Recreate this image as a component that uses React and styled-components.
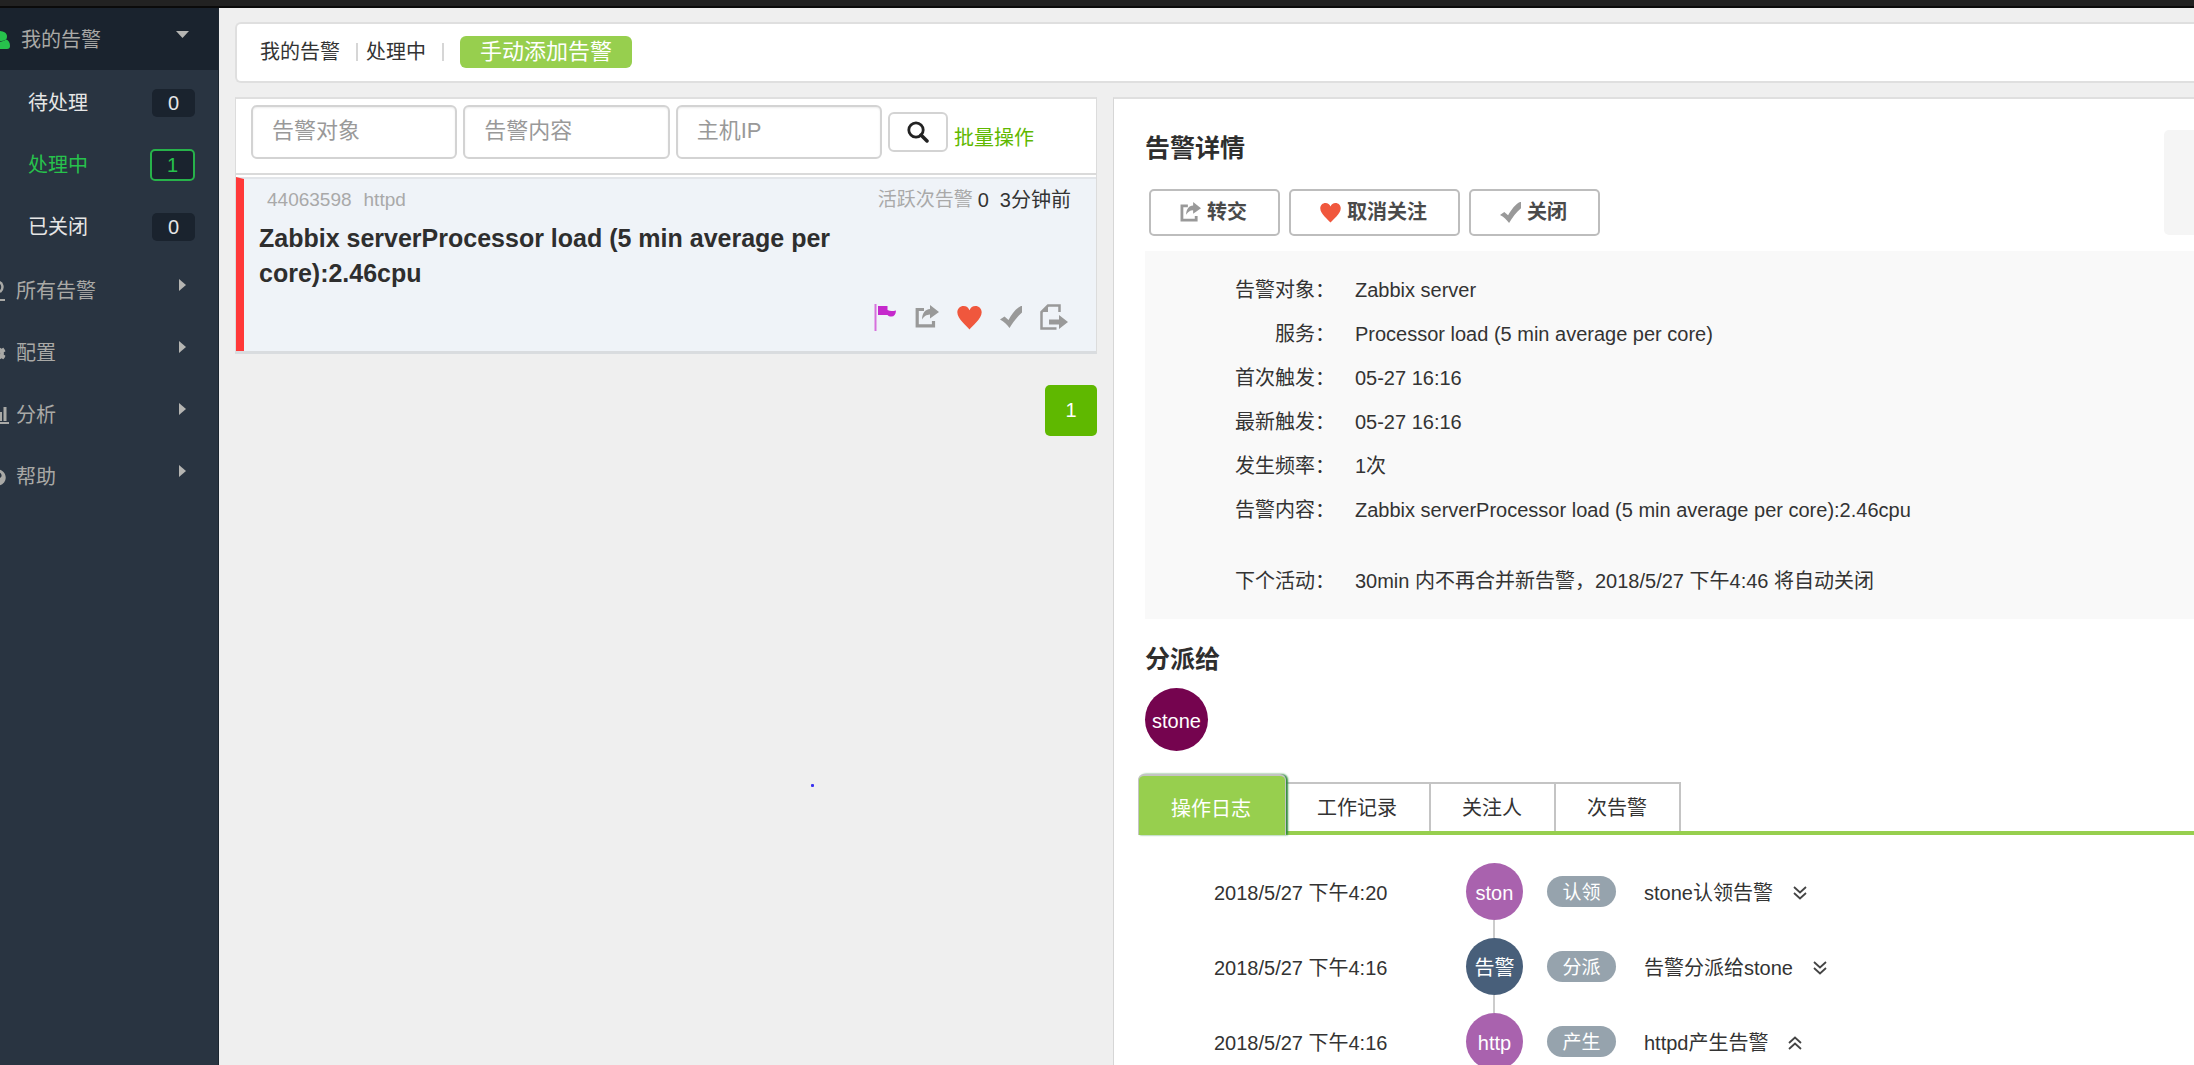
import React from "react";
import styled, { createGlobalStyle, css } from "styled-components";
import { FaCog, FaQuestionCircle } from "react-icons/fa";

const GlobalStyle = createGlobalStyle`
  *, *::before, *::after { box-sizing: border-box; }
  body {
    margin: 0;
    background: #efefef;
    color: #333;
    font-family: "Liberation Sans", Arial, "Noto Sans CJK SC", sans-serif;
    font-size: 20px;
    line-height: 30px;
  }
  button, input { font-family: inherit; }
  button { cursor: pointer; }
  h1, h2, h3, p, ul, ol, dl, dd { margin: 0; padding: 0; }
  ul, ol { list-style: none; }
`;

const Shell = styled.div`
  position: relative;
  display: flex;
  flex-direction: column;
  height: 100vh;
  overflow: hidden;
`;

const TopBar = styled.header`
  flex: none;
  height: 8px;
  background: #222;
  border-bottom: 2px solid #0b0b0b;
`;

const Body = styled.div`
  flex: 1;
  min-height: 0;
  display: flex;
`;

/* ---------- sidebar ---------- */

const Sidebar = styled.nav`
  flex: 0 0 219px;
  background: #293441;
  border-right: 1px solid #1c2630;
  overflow: hidden;
`;

const NavItem = styled.button`
  display: flex;
  align-items: center;
  width: 100%;
  height: 62px;
  padding: ${(p) => (p.$open ? "2px 29px 0 0" : "0 31px 0 0")};
  border: 0;
  background: ${(p) => (p.$open ? "#1a232e" : "transparent")};
  color: #a9a9a6;
  font-size: 20px;
  line-height: 30px;
  text-align: left;
`;

const NavIcon = styled.span`
  flex: none;
  display: flex;
  justify-content: flex-end;
  width: ${(p) => p.$edge}px;
  margin-right: ${(p) => p.$gap}px;
  color: ${(p) => (p.$active ? "#27c24c" : "inherit")};
  svg { flex: none; display: block; }
`;

const NavLabel = styled.span`
  flex: 1;
`;

const NavCaret = styled.svg`
  flex: none;
  margin-bottom: 12px;
`;

const SubList = styled.ul`
  padding: 2px 0;
`;

const SubItem = styled.button`
  display: flex;
  align-items: center;
  justify-content: space-between;
  width: 100%;
  height: 62px;
  padding: 0 23px 0 28px;
  border: 0;
  background: transparent;
  color: ${(p) => (p.$active ? "#27c24c" : "#e6e6e6")};
  font-size: 20px;
  line-height: 30px;
`;

const Badge = styled.span`
  min-width: 43px;
  border-radius: 5px;
  background: #1a232e;
  line-height: 28px;
  text-align: center;
  ${(p) =>
    p.$active &&
    css`
      min-width: 45px;
      border: 2px solid #27b24a;
    `}
`;

/* ---------- page ---------- */

const Main = styled.main`
  flex: 1;
  min-width: 0;
  display: flex;
  flex-direction: column;
  gap: 14px;
  padding: 14px 0 0 16px;
`;

const Crumbs = styled.div`
  flex: none;
  display: flex;
  align-items: center;
  height: 61px;
  padding: 0 23px 2px;
  background: #fff;
  border: 2px solid #dfdfdf;
  border-right: 0;
  border-radius: 6px 0 0 6px;
`;

const CrumbLink = styled.a`
  color: #333;
  text-decoration: none;
`;

const Divider = styled.span`
  width: 2px;
  height: 18px;
  margin: 0 ${(p) => p.$after}px 0 16px;
  background: #d6d6d6;
`;

const AddButton = styled.button`
  height: 32px;
  padding: 0 20px;
  border: 0;
  border-radius: 6px;
  background: #97cf4e;
  color: #fff;
  font-size: 22px;
  line-height: 30px;
`;

const Columns = styled.div`
  flex: 1;
  min-height: 0;
  display: grid;
  grid-template-columns: 44% 1fr;
  column-gap: 16px;
`;

/* ---------- alert list ---------- */

const ListColumn = styled.section`
  display: flex;
  flex-direction: column;
  align-items: stretch;
`;

const ListPanel = styled.div`
  background: #fff;
  border: 1px solid #dcdcdc;
  border-top: 2px solid #dfdfdf;
  border-bottom: 3px solid #d9dcdf;
`;

const Filters = styled.form`
  display: flex;
  align-items: center;
  gap: 6px;
  padding: 6px 62px 14px 15px;
  border-bottom: 2px solid #dadada;
`;

const FilterInput = styled.input`
  flex: 1;
  min-width: 0;
  height: 54px;
  padding: 0 19px 2px;
  border: 2px solid #d3d3d3;
  border-radius: 6px;
  background: #fff;
  box-shadow: inset 0 1px 2px rgba(0, 0, 0, 0.08);
  color: #333;
  font-size: 22px;
  &::placeholder { color: #999; opacity: 1; }
`;

const SearchButton = styled.button`
  flex: none;
  display: flex;
  align-items: center;
  justify-content: center;
  width: 60px;
  height: 40px;
  padding: 0;
  border: 2px solid #d3d3d3;
  border-radius: 6px;
  background: #fff;
`;

const BatchLink = styled.a`
  flex: none;
  padding-top: 12px;
  color: #5fb800;
  text-decoration: none;
`;

const Card = styled.article`
  margin-top: 2px;
  padding: 6px 25px 20px 15px;
  border-top: 2px solid #e2e5e9;
  border-left: 8px solid #ff3838;
  background: #eff3f8;
`;

const CardMeta = styled.div`
  display: flex;
  align-items: center;
  height: 30px;
  padding-left: 8px;
  color: #a9a9a9;
  font-size: 19px;
`;

const MetaText = styled.span`
  margin-right: ${(p) => (p.$push ? "auto" : "12px")};
`;

const MetaStrong = styled.span`
  margin-left: ${(p) => p.$gap}px;
  color: #333;
  font-size: 20px;
`;

const CardTitle = styled.h3`
  max-width: 610px;
  padding-top: 6px;
  color: #2e2e2e;
  font-size: 25px;
  line-height: 35px;
`;

const CardActions = styled.div`
  display: flex;
  align-items: center;
  justify-content: flex-end;
  gap: 18px;
  padding: 12px 3px 0 0;
`;

const IconButton = styled.button`
  display: flex;
  padding: 0;
  border: 0;
  background: transparent;
`;

const Pager = styled.div`
  display: flex;
  justify-content: flex-end;
  padding-top: 31px;
`;

const PageButton = styled.button`
  width: 52px;
  height: 51px;
  padding: 0;
  border: 0;
  border-radius: 5px;
  background: #5fb800;
  color: #fff;
  font-size: 20px;
`;

const Cursor = styled.span`
  position: absolute;
  left: 811px;
  top: 784px;
  width: 3px;
  height: 3px;
  border-radius: 1px;
  background: #3a32f0;
`;

/* ---------- alert detail ---------- */

const Detail = styled.section`
  min-width: 0;
  padding: 31px 0 0 31px;
  background: #fff;
  border-top: 2px solid #dfdfdf;
  border-left: 1px solid #d6d6d6;
  overflow: hidden;
`;

const DetailHead = styled.div`
  display: flex;
  justify-content: space-between;
  height: 121px;
`;

const SideBox = styled.div`
  width: 30px;
  height: 105px;
  border-radius: 5px 0 0 5px;
  background: #f5f5f5;
`;

const Heading = styled.h2`
  color: #2e2e2e;
  font-size: 25px;
  line-height: 36px;
`;

const Actions = styled.div`
  display: flex;
  gap: 9px;
  padding: 23px 0 0 4px;
`;

const ActionButton = styled.button`
  display: flex;
  align-items: center;
  gap: 6px;
  height: 47px;
  padding: 0 31px 0 29px;
  border: 2px solid #bdbdbd;
  border-radius: 5px;
  background: #fff;
  color: #4a4a4a;
  font-size: 20px;
  font-weight: 600;
`;

const ActionLabel = styled.span`
  padding-bottom: 4px;
`;

const Facts = styled.dl`
  padding: 17px 0 16px;
  background: #f9f9f9;
`;

const Fact = styled.div`
  display: grid;
  grid-template-columns: 190px 1fr;
  column-gap: 20px;
  margin-top: ${(p) => (p.$apart ? 27 : 0)}px;
  line-height: 44px;
`;

const FactName = styled.dt`
  text-align: right;
`;

const FactValue = styled.dd`
  white-space: nowrap;
`;

const Assign = styled.div`
  display: flex;
  flex-direction: column;
  gap: 11px;
  padding-top: 22px;
`;

const Avatar = styled.span`
  flex: none;
  display: flex;
  align-items: center;
  justify-content: center;
  width: ${(p) => p.$size}px;
  height: ${(p) => p.$size}px;
  padding-top: 2px;
  border-radius: 50%;
  background: ${(p) => p.$color};
  color: #fff;
`;

const Tabs = styled.div`
  display: flex;
  align-items: flex-end;
  margin: 23px 0 0 -7px;
  border-bottom: 4px solid #97cf4e;
`;

const Tab = styled.button`
  height: 49px;
  padding: 0 32px 0 31px;
  border: 2px solid #c4c4c4;
  border-width: 2px 2px 0 0;
  background: #fff;
  color: #333;
  font-size: 20px;
  line-height: 30px;
  ${(p) =>
    p.$active &&
    css`
      z-index: 1;
      height: 61px;
      margin-bottom: -4px;
      padding: 6px 34px 0 32px;
      border-width: 2px 1px 0;
      border-radius: 6px 6px 0 0;
      background: #97cf4e;
      box-shadow: 2px 0 2px #2f8a3c;
      color: #fff;
    `}
`;

const Log = styled.ol`
  padding: 28px 0 0 69px;
`;

const LogRow = styled.li`
  display: grid;
  grid-template-columns: 252px 57px 69px 1fr;
  height: 75px;
`;

const LogTime = styled.time`
  line-height: 61px;
`;

const Track = styled.div`
  display: flex;
  flex-direction: column;
  align-items: center;
  &::after {
    content: "";
    flex: 1;
    width: 2px;
    background: #ccc;
  }
`;

const Pill = styled.span`
  height: 31px;
  margin: 13px 0 0 24px;
  width: 69px;
  border-radius: 16px;
  background: #96a3ad;
  color: #fff;
  font-size: 19px;
  line-height: 34px;
  text-align: center;
`;

const LogText = styled.div`
  display: flex;
  align-items: center;
  gap: 20px;
  height: 60px;
  padding-left: 52px;
`;

/* ---------- icons ---------- */

const FlagIcon = () => (
  <svg width="24" height="28" viewBox="0 0 24 28" aria-hidden="true">
    <path d="M2.500 1v27" stroke="#d670dd" strokeWidth="2" />
    <path d="M5 3h9.500v4c2.500 1.500 5 1.300 8.500.5-.2 4-2 6-4.500 6-2 0-3-.5-4-1.500H5z" fill="#c529cc" />
  </svg>
);

const ShareIcon = ({ size }) => (
  <svg width={size} height={size} viewBox="0 0 24 24" aria-hidden="true">
    <path d="M9 4.500H2.200v16.300h16.300V16" fill="none" stroke="#999" strokeWidth="3.200" />
    <path d="M15 0 24 7l-9 6.500V9.500C11 9.800 9.500 11 7 14.500 7.200 8 10 4.500 15 4z" fill="#999" />
  </svg>
);

const HeartIcon = ({ size }) => (
  <svg width={size} height={size} viewBox="0 0 24 24" aria-hidden="true">
    <path d="M12 23.500C9.500 20 .3 13.500.3 7 .3 3.500 3 1 6.300 1 9 1 11 2.500 12 5c1-2.500 3-4 5.700-4 3.300 0 6 2.500 6 6C23.700 13.500 14.500 20 12 23.500z" fill="#f0573d" />
  </svg>
);

const CheckIcon = ({ size }) => (
  <svg width={size} height={size} viewBox="0 0 22 22" aria-hidden="true">
    <path d="M0 13.500 4.500 10.500l4 3.500C12 7.500 16.500 2 21 0h1v6.500C17 11 13 16 9.500 22 7 18.500 4 15.500 0 13.500z" fill="#999" />
  </svg>
);

const ExportIcon = () => (
  <svg width="28" height="26" viewBox="0 0 28 26" aria-hidden="true">
    <path d="M19.500 8V1.500H8L1.500 8v16.500h15" fill="none" stroke="#999" strokeWidth="2.500" />
    <path d="M1 8h7V1z" fill="#999" />
    <path d="M9 15.500h10V11l9 7-9 7v-4.500H9z" fill="#999" />
  </svg>
);

const SearchIcon = () => (
  <svg width="22" height="22" viewBox="0 0 22 22" aria-hidden="true">
    <circle cx="9" cy="9" r="7.200" fill="none" stroke="#222" strokeWidth="2.800" />
    <path d="M14 14l6 6" stroke="#222" strokeWidth="3.500" strokeLinecap="round" />
  </svg>
);

const UserIcon = () => (
  <svg width="22" height="18" viewBox="0 0 22 18" aria-hidden="true">
    <path d="M5 5.500C5 2 7.500 0 11.500 0S19 2 19 5.500 16.500 10 12 10 5 9 5 5.500z" fill="currentColor" />
    <path d="M0 15c0-4 2-6 5-6.500 4 3 9 3 13 0 2.500.8 4 3 4 6.500 0 2-1 3-3 3H3c-2 0-3-1-3-3z" fill="currentColor" />
  </svg>
);

const PersonLineIcon = () => (
  <svg width="20" height="22" viewBox="0 0 20 22" aria-hidden="true">
    <path d="M9.500 13C6 9 7 2 12.500 2S19 8.500 15 12" fill="none" stroke="currentColor" strokeWidth="2.500" />
    <path d="M0 20h20" stroke="currentColor" strokeWidth="2" />
  </svg>
);

const BarsIcon = () => (
  <svg width="24" height="18" viewBox="0 0 24 18" aria-hidden="true">
    <path d="M1 0v17h23" fill="none" stroke="currentColor" strokeWidth="2" />
    <path d="M6.500 15V9M11.500 15V4M15.500 15V6M20 15V1" stroke="currentColor" strokeWidth="3" />
  </svg>
);

const DoubleChevron = ({ up }) => (
  <svg width="14" height="14" viewBox="0 0 14 14" aria-hidden="true">
    <path
      d={up ? "M1 7 7 1.500 13 7M1 13 7 7.500 13 13" : "M1 1 7 6.500 13 1M1 7 7 12.500 13 7"}
      fill="none"
      stroke="#444"
      strokeWidth="1.800"
    />
  </svg>
);

const CaretDown = () => (
  <NavCaret width="13" height="7" viewBox="0 0 13 7" aria-hidden="true">
    <path d="M0 0h13L6.500 7z" fill="#b5b5b2" />
  </NavCaret>
);

const CaretRight = () => (
  <NavCaret width="9" height="12" viewBox="0 0 9 12" aria-hidden="true">
    <path d="M1 0v12l7-6z" fill="#b5b5b2" />
  </NavCaret>
);

/* ---------- data ---------- */

const queues = [
  { name: "待处理", count: 0 },
  { name: "处理中", count: 1, active: true },
  { name: "已关闭", count: 0 },
];

const sections = [
  { name: "所有告警", icon: <PersonLineIcon />, edge: 5 },
  { name: "配置", icon: <FaCog size={17} />, edge: 6 },
  { name: "分析", icon: <BarsIcon />, edge: 9 },
  { name: "帮助", icon: <FaQuestionCircle size={17} />, edge: 6 },
];

const facts = [
  ["告警对象", "Zabbix server"],
  ["服务", "Processor load (5 min average per core)"],
  ["首次触发", "05-27 16:16"],
  ["最新触发", "05-27 16:16"],
  ["发生频率", "1次"],
  ["告警内容", "Zabbix serverProcessor load (5 min average per core):2.46cpu"],
  ["下个活动", "30min 内不再合并新告警，2018/5/27 下午4:46 将自动关闭"],
];

const tabs = ["操作日志", "工作记录", "关注人", "次告警"];

const log = [
  { time: "2018/5/27 下午4:20", who: "ston", color: "#a962ae", kind: "认领", text: "stone认领告警" },
  { time: "2018/5/27 下午4:16", who: "告警", color: "#485f7a", kind: "分派", text: "告警分派给stone" },
  { time: "2018/5/27 下午4:16", who: "http", color: "#a962ae", kind: "产生", text: "httpd产生告警", open: true },
];

export default function App() {
  return (
    <Shell>
      <GlobalStyle />
      <TopBar />
      <Body>
        <Sidebar>
          <NavItem $open>
            <NavIcon $edge={10} $gap={11} $active>
              <UserIcon />
            </NavIcon>
            <NavLabel>我的告警</NavLabel>
            <CaretDown />
          </NavItem>
          <SubList>
            {queues.map((q) => (
              <li key={q.name}>
                <SubItem $active={q.active}>
                  <span>{q.name}</span>
                  <Badge $active={q.active}>{q.count}</Badge>
                </SubItem>
              </li>
            ))}
          </SubList>
          {sections.map((s) => (
            <NavItem key={s.name}>
              <NavIcon $edge={s.edge} $gap={16 - s.edge}>
                {s.icon}
              </NavIcon>
              <NavLabel>{s.name}</NavLabel>
              <CaretRight />
            </NavItem>
          ))}
        </Sidebar>

        <Main>
          <Crumbs>
            <CrumbLink href="#mine">我的告警</CrumbLink>
            <Divider $after={8} />
            <CrumbLink href="#processing">处理中</CrumbLink>
            <Divider $after={16} />
            <AddButton>手动添加告警</AddButton>
          </Crumbs>

          <Columns>
            <ListColumn>
              <ListPanel>
                <Filters>
                  <FilterInput aria-label="告警对象" placeholder="告警对象" />
                  <FilterInput aria-label="告警内容" placeholder="告警内容" />
                  <FilterInput aria-label="主机IP" placeholder="主机IP" />
                  <SearchButton type="button" aria-label="搜索">
                    <SearchIcon />
                  </SearchButton>
                  <BatchLink href="#batch">批量操作</BatchLink>
                </Filters>
                <Card>
                  <CardMeta>
                    <MetaText>44063598</MetaText>
                    <MetaText $push>httpd</MetaText>
                    <span>活跃次告警</span>
                    <MetaStrong $gap={5}>0</MetaStrong>
                    <MetaStrong $gap={11}>3分钟前</MetaStrong>
                  </CardMeta>
                  <CardTitle>Zabbix serverProcessor load (5 min average per core):2.46cpu</CardTitle>
                  <CardActions>
                    <IconButton aria-label="标记"><FlagIcon /></IconButton>
                    <IconButton aria-label="转交"><ShareIcon size={24} /></IconButton>
                    <IconButton aria-label="取消关注"><HeartIcon size={25} /></IconButton>
                    <IconButton aria-label="关闭"><CheckIcon size={22} /></IconButton>
                    <IconButton aria-label="导出"><ExportIcon /></IconButton>
                  </CardActions>
                </Card>
              </ListPanel>
              <Pager>
                <PageButton>1</PageButton>
              </Pager>
            </ListColumn>

            <Detail>
              <DetailHead>
                <div>
                  <Heading>告警详情</Heading>
                  <Actions>
                    <ActionButton><ShareIcon size={21} /><ActionLabel>转交</ActionLabel></ActionButton>
                    <ActionButton><HeartIcon size={21} /><ActionLabel>取消关注</ActionLabel></ActionButton>
                    <ActionButton><CheckIcon size={21} /><ActionLabel>关闭</ActionLabel></ActionButton>
                  </Actions>
                </div>
                <SideBox />
              </DetailHead>

              <Facts>
                {facts.map(([name, value], i) => (
                  <Fact key={name} $apart={i === facts.length - 1}>
                    <FactName>{name}：</FactName>
                    <FactValue>{value}</FactValue>
                  </Fact>
                ))}
              </Facts>

              <Assign>
                <Heading>分派给</Heading>
                <Avatar $size={63} $color="#75044f">stone</Avatar>
              </Assign>

              <Tabs role="tablist">
                {tabs.map((t, i) => (
                  <Tab key={t} role="tab" aria-selected={i === 0} $active={i === 0}>
                    {t}
                  </Tab>
                ))}
              </Tabs>

              <Log>
                {log.map((entry, i) => (
                  <LogRow key={entry.text}>
                    <LogTime>{entry.time}</LogTime>
                    <Track>
                      <Avatar $size={57} $color={entry.color}>{entry.who}</Avatar>
                    </Track>
                    <Pill>{entry.kind}</Pill>
                    <LogText>
                      {entry.text}
                      <DoubleChevron up={entry.open} />
                    </LogText>
                  </LogRow>
                ))}
              </Log>
            </Detail>
          </Columns>
        </Main>
      </Body>
      <Cursor />
    </Shell>
  );
}
